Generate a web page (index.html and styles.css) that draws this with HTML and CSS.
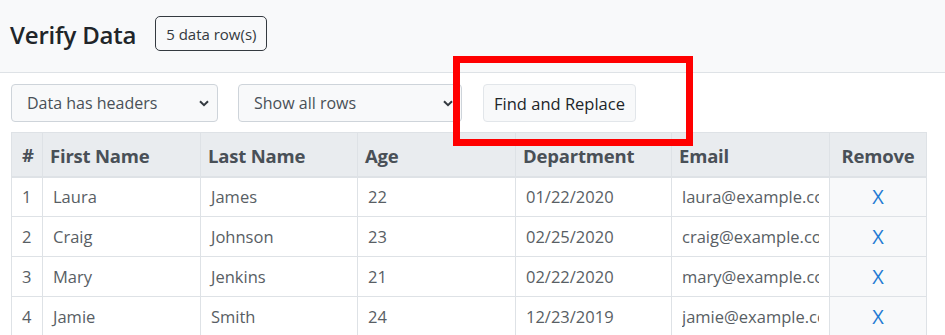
FILE: index.html
```html
<!DOCTYPE html>
<html lang="en">
<head>
<meta charset="utf-8">
<title>Verify Data</title>
<link rel="stylesheet" href="styles.css">
</head>
<body>
<header class="topbar">
  <h4 class="title">Verify Data</h4>
  <span class="count-badge">5 data row(s)</span>
</header>
<main class="content">
  <div class="toolbar">
    <div class="select-wrap select-headers">
      <select class="select"><option>Data has headers</option></select>
      <svg class="chev" width="10" height="7" viewBox="0 0 10 7"><path d="M1 1.2l4 4 4-4" fill="none" stroke="#343a40" stroke-width="2"/></svg>
    </div>
    <div class="select-wrap select-rows">
      <select class="select"><option>Show all rows</option></select>
      <svg class="chev" width="10" height="7" viewBox="0 0 10 7"><path d="M1 1.2l4 4 4-4" fill="none" stroke="#343a40" stroke-width="2"/></svg>
    </div>
    <button class="btn">Find and Replace</button>
  </div>
  <table class="data">
    <colgroup>
      <col class="c-num"><col class="c-wide"><col class="c-last"><col class="c-wide"><col class="c-dept"><col class="c-wide"><col class="c-rm">
    </colgroup>
    <thead>
      <tr><th class="num">#</th><th>First Name</th><th>Last Name</th><th>Age</th><th>Department</th><th>Email</th><th class="rm">Remove</th></tr>
    </thead>
    <tbody>
      <tr><td class="num">1</td><td>Laura</td><td>James</td><td>22</td><td>01/22/2020</td><td><div class="clip">laura@example.com</div></td><td class="rm"><span class="x">X</span></td></tr>
      <tr><td class="num">2</td><td>Craig</td><td>Johnson</td><td>23</td><td>02/25/2020</td><td><div class="clip">craig@example.com</div></td><td class="rm"><span class="x">X</span></td></tr>
      <tr><td class="num">3</td><td>Mary</td><td>Jenkins</td><td>21</td><td>02/22/2020</td><td><div class="clip">mary@example.com</div></td><td class="rm"><span class="x">X</span></td></tr>
      <tr><td class="num">4</td><td>Jamie</td><td>Smith</td><td>24</td><td>12/23/2019</td><td><div class="clip">jamie@example.com</div></td><td class="rm"><span class="x">X</span></td></tr>
      <tr><td class="num">5</td><td>Tom</td><td>Brown</td><td>25</td><td>01/05/2020</td><td><div class="clip">tom@example.com</div></td><td class="rm"><span class="x">X</span></td></tr>
    </tbody>
  </table>
</main>
<div class="highlight"></div>
</body>
</html>
```
FILE: styles.css
```css
* { box-sizing: border-box; }
html, body { margin: 0; padding: 0; background: #fff; }
body {
  font-family: "Open Sans", "Noto Sans", sans-serif;
  color: #212529;
  position: relative;
  overflow: hidden;
  height: 335px;
}
.topbar {
  height: 73px;
  background: #f8f9fa;
  border-bottom: 1px solid #dee2e6;
  display: flex;
  align-items: center;
  padding: 0 0 3px 10px;
}
.title {
  margin: 0;
  font-size: 24px;
  font-weight: 600;
  color: #212529;
  letter-spacing: -0.2px;
}
.count-badge {
  margin-left: 19px;
  height: 35px;
  width: 112px;
  border: 1px solid #343a40;
  border-radius: 5px;
  display: flex;
  align-items: center;
  justify-content: center;
  font-size: 15px;
  color: #343a40;
  margin-top: -2px;
}
.content { padding: 11px 0 0 11px; }
.toolbar { display: flex; align-items: center; height: 38px; }
.select-wrap { position: relative; height: 38px; }
.select-headers { width: 207px; }
.select-rows { width: 224px; margin-left: 20px; }
.select {
  -webkit-appearance: none;
  appearance: none;
  width: 100%;
  height: 38px;
  border: 1px solid #ced4da;
  border-radius: 4px;
  background: #f8f9fa;
  font-family: inherit;
  font-size: 16px;
  color: #495057;
  padding: 0 30px 0 15px;
}
.chev { position: absolute; right: 9px; top: 16px; }
.btn {
  margin-left: 21px;
  width: 153px;
  height: 38px;
  border: 1px solid #e2e6ea;
  border-radius: 4px;
  background: #f8f9fa;
  font-family: inherit;
  font-size: 16.5px;
  color: #212529;
  padding: 0;
}
.data {
  margin-top: 10px;
  width: 915px;
  border-collapse: collapse;
  table-layout: fixed;
}
.c-num { width: 31px; }
.c-wide { width: 158px; }
.c-last { width: 157px; }
.c-dept { width: 156px; }
.c-rm { width: 97px; }
.data th, .data td { border: 1px solid #dee2e6; text-align: left; white-space: nowrap; }
.data th {
  background: #e9ecef;
  color: #495057;
  font-size: 18.5px;
  font-weight: 700;
  height: 44px;
  padding: 2px 7px 0;
  border-bottom-width: 2px;
  letter-spacing: -0.2px;
}
.data td {
  height: 40px;
  padding: 0 11px 0 10px;
  font-size: 16.5px;
  color: #585e64;
}
.data .num { padding: 0 0 0 10px; }
.data th.rm { text-align: center; padding: 2px 0 0; }
.data td.rm { text-align: center; background: #f8f9fa; padding: 0; }
.clip { overflow: hidden; width: 137px; }
.x { color: #1f7bd3; font-size: 20px; }
.highlight {
  position: absolute;
  left: 453px;
  top: 56px;
  width: 240px;
  height: 90px;
  border: 7px solid #f00;
}
```
